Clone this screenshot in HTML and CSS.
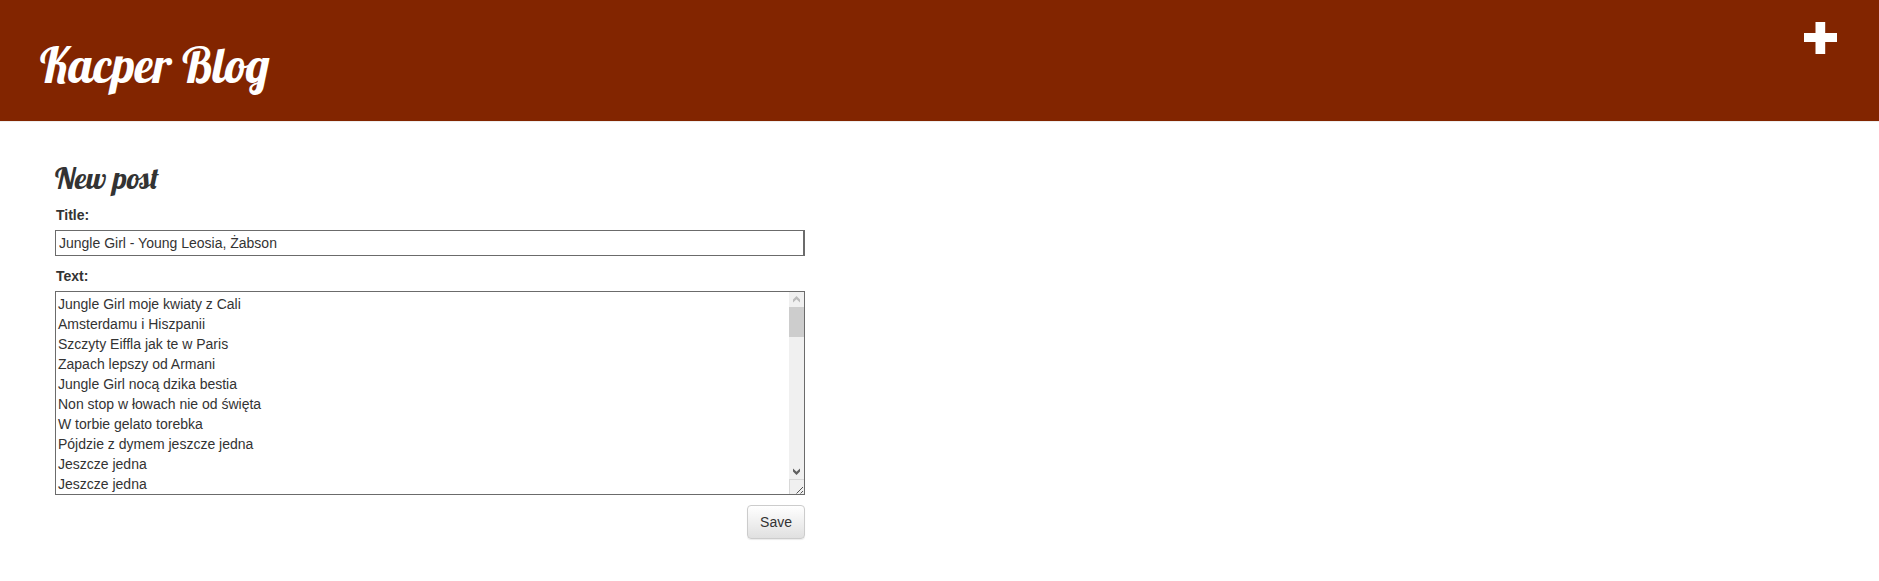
FILE: index.html
```html
<!DOCTYPE html>
<html lang="pl">
<head>
<meta charset="utf-8">
<title>Kacper Blog</title>
<link rel="stylesheet" href="styles.css">
</head>
<body>
<header class="page-header">
  <h1 class="brand"><a href="#">Kacper Blog</a></h1>
  <a class="new-post" href="#" aria-label="New post">
    <svg viewBox="0 0 33 32" width="33" height="32" aria-hidden="true"><path d="M11.500 0h9.700v11h11.800v9H21.200v12h-9.700V20H0v-9h11.500z" fill="#fff"/></svg>
  </a>
</header>
<main class="content">
  <h2 class="heading">New post</h2>
  <form class="post-form">
    <div class="field">
      <label for="title">Title:</label>
      <input class="title-input" id="title" type="text" value="Jungle Girl - Young Leosia, Żabson">
    </div>
    <div class="field">
      <label for="text">Text:</label>
      <div class="text-box">
        <textarea class="text-input" id="text" spellcheck="false">Jungle Girl moje kwiaty z Cali
Amsterdamu i Hiszpanii
Szczyty Eiffla jak te w Paris
Zapach lepszy od Armani
Jungle Girl nocą dzika bestia
Non stop w łowach nie od święta
W torbie gelato torebka
Pójdzie z dymem jeszcze jedna
Jeszcze jedna
Jeszcze jedna</textarea>
        <div class="scrollbar" aria-hidden="true">
          <svg class="scroll-arrow" viewBox="0 0 15 15"><path d="M4 10.500V7.500L7.500 4 11 7.500v3L7.500 7.300z" fill="#bbb"/></svg>
          <div class="scroll-track"><div class="scroll-thumb"></div></div>
          <svg class="scroll-arrow" viewBox="0 0 15 15"><path d="M4 4.500v3L7.500 11 11 7.500v-3L7.500 7.700z" fill="#606060"/></svg>
        </div>
      </div>
    </div>
    <button class="save" type="button">Save</button>
  </form>
</main>
</body>
</html>
```

FILE: styles.css
```css
* { box-sizing: border-box; }

body {
  margin: 0;
  background: #fff;
  color: #333;
  font: 14px/20px "Liberation Sans", Arial, sans-serif;
}

.page-header {
  display: flex;
  justify-content: space-between;
  align-items: flex-start;
  padding: 20px 42px 20px 40px;
  background: #822500;
  border-bottom: 1px solid #eee;
}

.brand {
  margin: 15px 0 6px;
  font: normal 48px/60px Lobster, "Liberation Serif", serif;
}

.brand a {
  color: #fff;
  text-decoration: none;
}

.new-post {
  display: block;
  margin-top: 2px;
}

.new-post svg { display: block; }

.content {
  max-width: 805px;
  padding: 40px 0 40px 55px;
}

.heading {
  margin: 0 0 10px;
  font: normal 30px/33px Lobster, "Liberation Serif", serif;
}

.post-form {
  display: flex;
  flex-direction: column;
  gap: 10px;
}

.field {
  display: flex;
  flex-direction: column;
  gap: 5px;
}

.field label {
  padding-left: 1px;
  font-weight: bold;
}

.title-input,
.text-input {
  display: block;
  width: 100%;
  margin: 0;
  border: 1px solid #6b6b6b;
  border-radius: 0;
  background: #fff;
  color: #333;
  font: inherit;
  outline: none;
}

.title-input {
  height: 26px;
  padding: 2px 3px;
  border-right-width: 2px;
}

.text-box { position: relative; }

.text-input {
  height: 204px;
  padding: 2px 17px 0 2px;
  resize: both;
  overflow: hidden;
}

.text-input::-webkit-resizer {
  border-top: 1px solid #d8d8d8;
  border-left: 1px solid #d8d8d8;
  background: #f0f0f0 url("data:image/svg+xml,%3Csvg xmlns='http://www.w3.org/2000/svg' viewBox='0 0 14 14'%3E%3Cpath d='M6.500 13.500l6.500-6.500M10.500 13.500l2.500-2.500' stroke='%23555' fill='none'/%3E%3C/svg%3E") center / 14px 14px no-repeat;
}

/* Sits over the right edge of the text area, above the resize corner */
.scrollbar {
  position: absolute;
  top: 1px;
  right: 1px;
  bottom: 16px;
  width: 15px;
  display: flex;
  flex-direction: column;
  background: #f0f0f0;
}

.scroll-arrow {
  display: block;
  height: 15px;
}

.scroll-track { flex: 1; }

.scroll-thumb {
  height: 30px;
  background: #cdcdcd;
}

.save {
  align-self: flex-end;
  padding: 6px 12px;
  border: 1px solid #ccc;
  border-radius: 4px;
  background: linear-gradient(#fff, #e0e0e0);
  color: #333;
  font: inherit;
  box-shadow: 0 1px 1px rgba(0, 0, 0, 0.08);
}
```
